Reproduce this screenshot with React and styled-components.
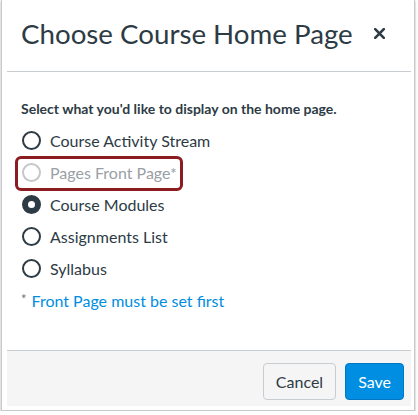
import React from "react";
import styled, { createGlobalStyle } from "styled-components";

const Global = createGlobalStyle`
  body {
    margin: 0;
    background: #fff;
    font-family: Lato, "Open Sans", sans-serif;
    color: #2d3b45;
  }
`;

const Frame = styled.div`
  width: 404px;
  height: 406px;
  margin-left: 1px;
  border: 1px solid #c9c9c9;
  border-top: none;
  box-shadow: 0 1px 2px rgba(0, 0, 0, 0.35);
  background: #fff;
  padding: 0 3px 4px 5px;
  box-sizing: content-box;
  display: flex;
  flex-direction: column;
`;

const Dialog = styled.div`
  flex: 1;
  display: flex;
  flex-direction: column;
`;

const Header = styled.div`
  height: 72px;
  box-sizing: border-box;
  border-bottom: 1px solid #c7cdd1;
  display: flex;
  align-items: center;
  justify-content: space-between;
  padding: 0 26px 4px 14px;
`;

const Title = styled.h1`
  margin: 0;
  font-size: 27.7px;
  font-weight: 400;
  line-height: 1;
  color: #2d3b45;
`;

const Close = styled.button`
  border: none;
  background: none;
  padding: 0;
  width: 11px;
  height: 11px;
  display: flex;
  cursor: pointer;
`;

const Body = styled.div`
  flex: 1;
  padding: 27px 14px 0;
`;

const Prompt = styled.p`
  margin: 0 0 5px;
  font-size: 14px;
  font-weight: 700;
  line-height: 20px;
`;

const Option = styled.label`
  position: relative;
  height: 32px;
  display: flex;
  align-items: center;
  gap: 9px;
  padding-left: 1px;
  font-size: 16px;
  color: ${(p) => (p.$disabled ? "#9aa0a5" : "#2d3b45")};
`;

const Radio = styled.span`
  width: 19px;
  height: 19px;
  box-sizing: border-box;
  border-radius: 50%;
  border: 2px solid ${(p) => (p.$disabled ? "#c4c8cb" : "#2d3b45")};
  background: ${(p) => (p.$checked ? "#2d3b45" : "#fff")};
  display: flex;
  align-items: center;
  justify-content: center;
  &::after {
    content: "";
    width: 7px;
    height: 7px;
    border-radius: 50%;
    background: #fff;
    display: ${(p) => (p.$checked ? "block" : "none")};
  }
`;

const Highlight = styled.span`
  position: absolute;
  left: -6px;
  top: 0;
  width: 168px;
  height: 35px;
  box-sizing: border-box;
  border: 3px solid #8b1c1f;
  border-radius: 6px;
  pointer-events: none;
`;

const Note = styled.div`
  height: 32px;
  display: flex;
  align-items: center;
  font-size: 16px;
  color: #008ee2;
  & span {
    color: #6b7780;
    font-size: 13px;
    margin-right: 5px;
    align-self: flex-start;
    margin-top: 7px;
  }
`;

const Footer = styled.div`
  height: 56px;
  box-sizing: border-box;
  border-top: 1px solid #c7cdd1;
  background: #f5f5f5;
  display: flex;
  align-items: center;
  justify-content: flex-end;
  gap: 9px;
  padding: 5px 7px 0 0;
`;

const Button = styled.button`
  height: 37px;
  min-width: ${(p) => (p.$primary ? "58px" : "73px")};
  padding: 0 12px;
  border-radius: 4px;
  font-family: Lato, sans-serif;
  font-size: 16px;
  border: 1px solid ${(p) => (p.$primary ? "#0077c2" : "#c7cdd1")};
  background: ${(p) => (p.$primary ? "#008ee2" : "#f5f5f5")};
  color: ${(p) => (p.$primary ? "#fff" : "#2d3b45")};
`;

const options = [
  { label: "Course Activity Stream" },
  { label: "Pages Front Page*", disabled: true, marked: true },
  { label: "Course Modules", checked: true },
  { label: "Assignments List" },
  { label: "Syllabus" },
];

export default function App() {
  return (
    <>
      <Global />
      <Frame>
        <Dialog>
          <Header>
            <Title>Choose Course Home Page</Title>
            <Close aria-label="Close">
              <svg width="11" height="11" viewBox="0 0 11 11">
                <path
                  d="M1.2 1.2 L9.8 9.8 M9.8 1.2 L1.2 9.8"
                  stroke="#2d3b45"
                  strokeWidth="2.6"
                  strokeLinecap="round"
                />
              </svg>
            </Close>
          </Header>
          <Body>
            <Prompt>Select what you'd like to display on the home page.</Prompt>
            {options.map((o) => (
              <Option key={o.label} $disabled={o.disabled}>
                <Radio $checked={o.checked} $disabled={o.disabled} />
                {o.label}
                {o.marked && <Highlight />}
              </Option>
            ))}
            <Note>
              <span>*</span>Front Page must be set first
            </Note>
          </Body>
          <Footer>
            <Button>Cancel</Button>
            <Button $primary>Save</Button>
          </Footer>
        </Dialog>
      </Frame>
    </>
  );
}
